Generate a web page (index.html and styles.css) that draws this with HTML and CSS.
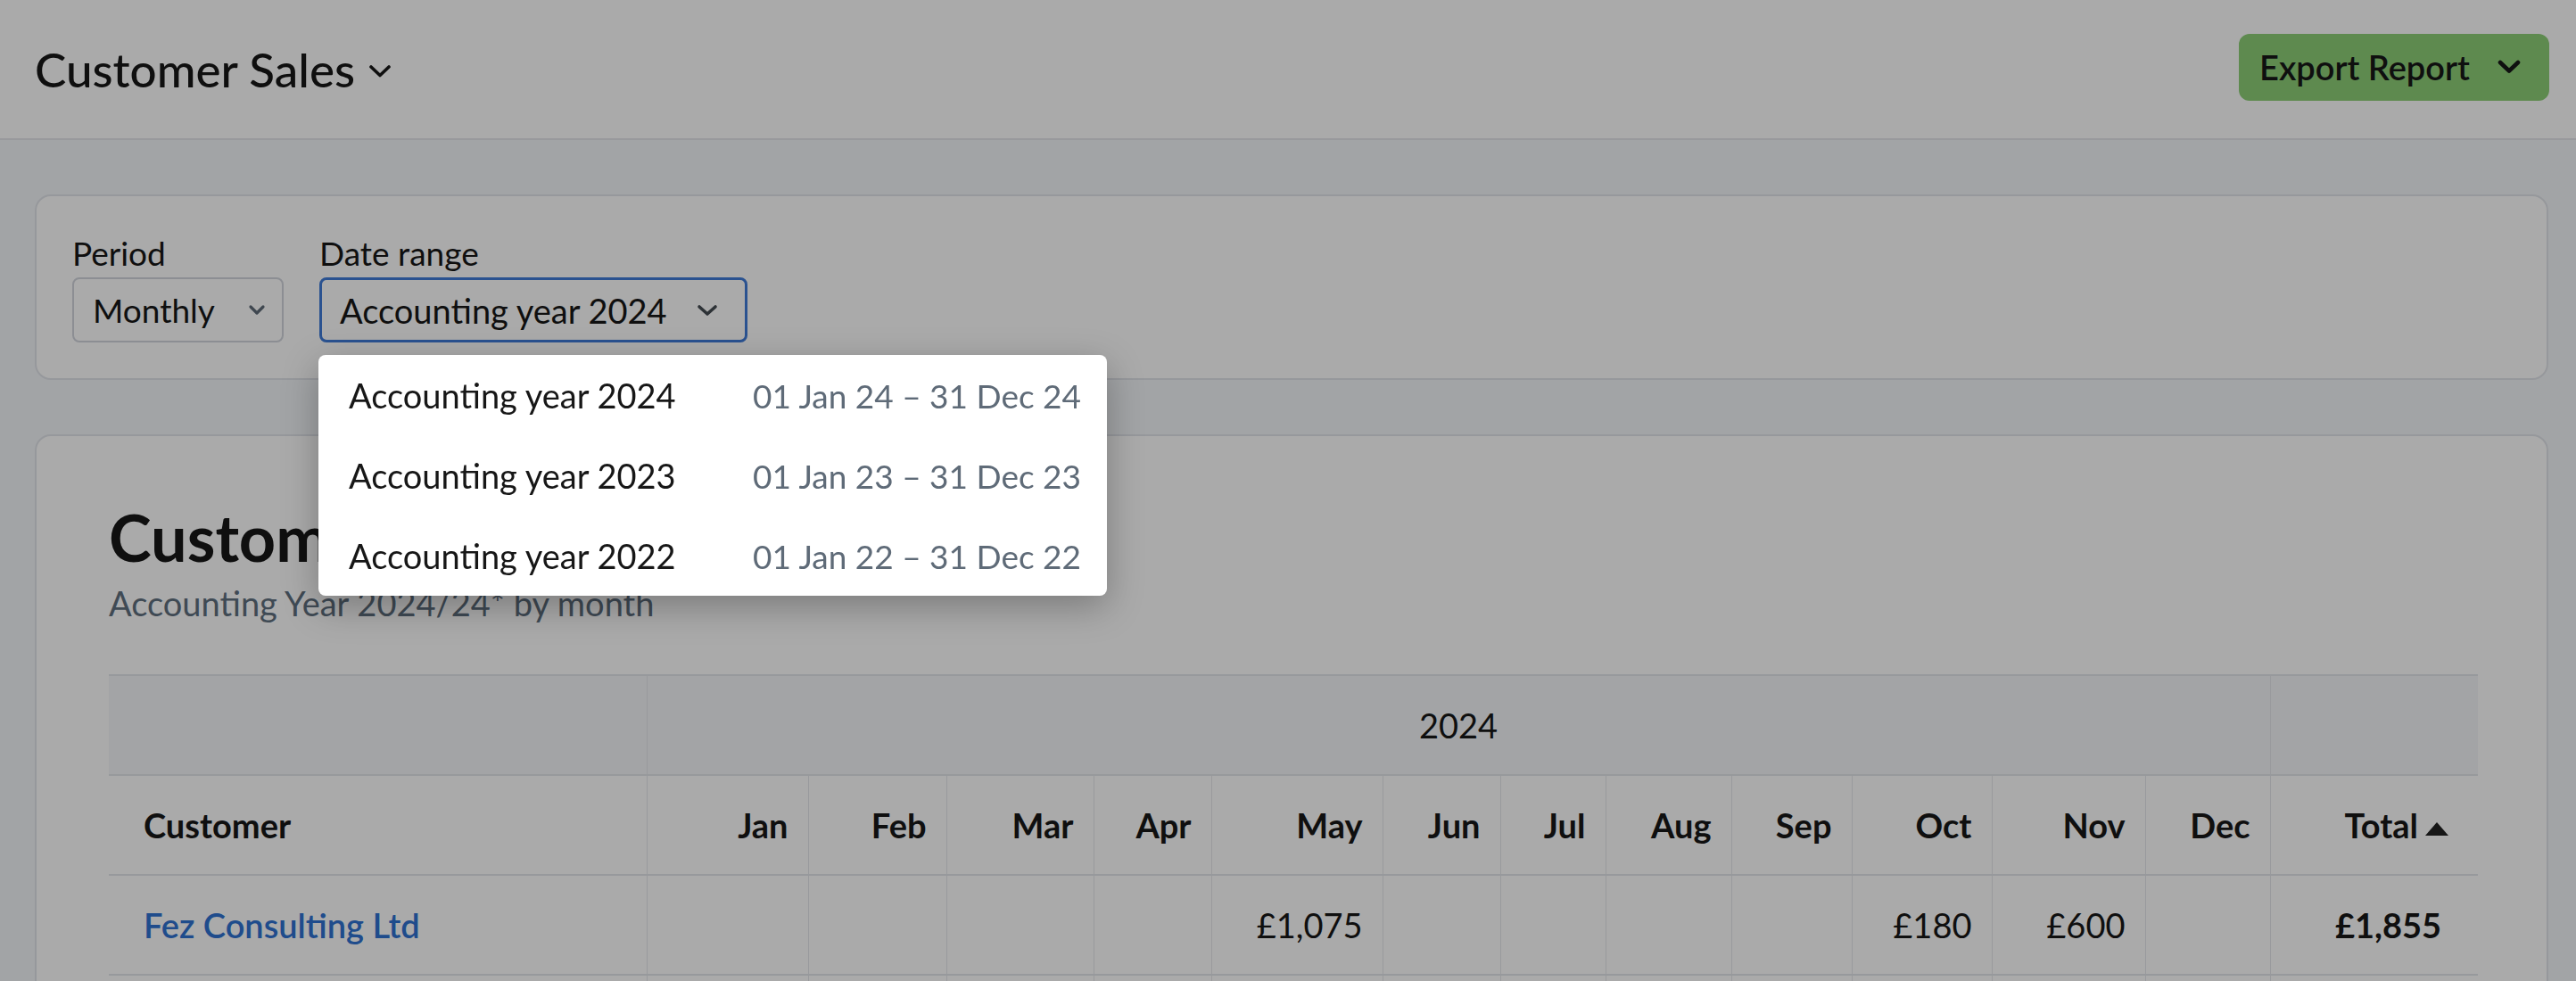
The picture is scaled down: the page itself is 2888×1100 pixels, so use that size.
FILE: index.html
```html
<!DOCTYPE html>
<html lang="en">
<head>
<meta charset="utf-8">
<title>Customer Sales</title>
<link rel="stylesheet" href="styles.css">
</head>
<body>
<header class="topbar">
  <h1 class="page-title">Customer Sales
    <svg class="title-chev" width="24" height="14" viewBox="0 0 24 14"><path d="M2 2 L12 11.5 L22 2" fill="none" stroke="#171717" stroke-width="3.6" stroke-linecap="round" stroke-linejoin="round"/></svg>
  </h1>
  <button class="export-btn">Export Report
    <svg class="export-chev" width="26" height="16" viewBox="0 0 26 16"><path d="M3 3 L13 12.5 L23 3" fill="none" stroke="#171717" stroke-width="4.6" stroke-linecap="round" stroke-linejoin="round"/></svg>
  </button>
</header>

<main class="content">
  <section class="card filters">
    <div class="field">
      <label class="field-label">Period</label>
      <div class="select select-period">
        <span>Monthly</span>
        <svg width="20" height="13" viewBox="0 0 20 13"><path d="M3 3 L10 10 L17 3" fill="none" stroke="#5f6b78" stroke-width="3.2" stroke-linecap="round" stroke-linejoin="round"/></svg>
      </div>
    </div>
    <div class="field field-range">
      <label class="field-label">Date range</label>
      <div class="select select-range">
        <span>Accounting year 2024</span>
        <svg width="24" height="14" viewBox="0 0 24 14"><path d="M3 3 L12 11 L21 3" fill="none" stroke="#444b52" stroke-width="3.6" stroke-linecap="round" stroke-linejoin="round"/></svg>
      </div>
      <ul class="menu">
        <li class="menu-item"><span>Accounting year 2024</span><span class="menu-date">01 Jan 24 – 31 Dec 24</span></li>
        <li class="menu-item"><span>Accounting year 2023</span><span class="menu-date">01 Jan 23 – 31 Dec 23</span></li>
        <li class="menu-item"><span>Accounting year 2022</span><span class="menu-date">01 Jan 22 – 31 Dec 22</span></li>
      </ul>
    </div>
  </section>

  <section class="card report">
    <h2 class="report-title">Customer Sales</h2>
    <p class="report-sub">Accounting Year 2024/24* by month</p>
    <table class="sales">
      <colgroup>
        <col class="w-cust"><col class="w-jan"><col class="w-feb"><col class="w-mar"><col class="w-apr"><col class="w-may"><col class="w-jun"><col class="w-jul"><col class="w-aug"><col class="w-sep"><col class="w-oct"><col class="w-nov"><col class="w-dec"><col class="w-total">
      </colgroup>
      <thead>
        <tr class="year-row">
          <th class="blank"></th>
          <th class="year" colspan="12">2024</th>
          <th class="blank"></th>
        </tr>
        <tr class="month-row">
          <th class="cust-head">Customer</th>
          <th>Jan</th><th>Feb</th><th>Mar</th><th>Apr</th><th>May</th><th>Jun</th><th>Jul</th><th>Aug</th><th>Sep</th><th>Oct</th><th>Nov</th><th>Dec</th>
          <th class="total-head">Total<span class="sort-up"></span></th>
        </tr>
      </thead>
      <tbody>
        <tr>
          <td class="cust"><a class="cust-link">Fez Consulting Ltd</a></td>
          <td></td><td></td><td></td><td></td><td>£1,075</td><td></td><td></td><td></td><td></td><td>£180</td><td>£600</td><td></td>
          <td class="total">£1,855</td>
        </tr>
        <tr>
          <td class="cust"></td>
          <td></td><td></td><td></td><td></td><td></td><td></td><td></td><td></td><td></td><td></td><td></td><td></td>
          <td class="total"></td>
        </tr>
      </tbody>
    </table>
  </section>
</main>

<div class="backdrop"></div>
</body>
</html>
```

FILE: styles.css
```css
* { box-sizing: border-box; }
html, body { margin: 0; padding: 0; }
body {
  background: #f4f6fa;
  font-family: Lato, "Liberation Sans", sans-serif;
  color: #171717;
  height: 1100px;
  overflow: hidden;
}

.topbar {
  height: 157px;
  background: #ffffff;
  border-bottom: 2px solid #e4e6ea;
  display: flex;
  align-items: center;
  justify-content: space-between;
  padding: 0 30px 0 39px;
}
.page-title {
  margin: 0;
  font-size: 53px;
  font-weight: 500;
  display: flex;
  align-items: center;
  gap: 16px;
  line-height: 60px;
}
.title-chev { margin-top: 4px; }

.export-btn {
  height: 75px;
  width: 348px;
  margin-bottom: 5px;
  background: #8dcf77;
  border: none;
  border-radius: 12px;
  font-family: inherit;
  font-size: 38px;
  font-weight: 600;
  color: #171717;
  display: flex;
  align-items: center;
  padding: 0 32px 0 23px;
  justify-content: space-between;
}

.content { padding: 0 31px 0 39px; }

.card {
  background: #ffffff;
  border: 2px solid #e2e5ea;
  border-radius: 18px;
}
.filters {
  margin-top: 61px;
  height: 208px;
  padding: 43px 40px 0 40px;
  display: flex;
  gap: 40px;
}
.field { display: flex; flex-direction: column; }
.field-range { position: relative; }
.field-label {
  font-size: 37px;
  line-height: 42px;
  margin-bottom: 6px;
}
.select {
  height: 73px;
  border-radius: 8px;
  display: flex;
  align-items: center;
  justify-content: space-between;
  font-size: 38px;
}
.select-period {
  width: 237px;
  border: 2px solid #d2d6dd;
  padding: 0 18px 0 21px;
  font-size: 37px;
}
.select-range {
  width: 480px;
  border: 3px solid #3f7bd9;
  padding: 0 30px 0 20px;
}

.menu {
  position: absolute;
  z-index: 20;
  top: 135px;
  left: -1px;
  width: 884px;
  margin: 0;
  padding: 0;
  list-style: none;
  background: #ffffff;
  border-radius: 8px;
  box-shadow: 0 12px 40px rgba(0, 0, 0, 0.28);
}
.menu-item {
  height: 90px;
  display: flex;
  align-items: center;
  justify-content: space-between;
  padding: 0 29px 0 34px;
  font-size: 38px;
}
.menu-date { color: #5f6b78; font-size: 37px; }

.report {
  margin-top: 61px;
  height: 800px;
  padding: 70px 81px 0 81px;
}
.report-title {
  margin: 0;
  font-size: 72px;
  font-weight: 700;
  line-height: 86px;
}
.report-sub {
  margin: 9px 0 0 0;
  font-size: 38px;
  line-height: 44px;
  color: #5f6f7f;
}

.sales {
  margin-top: 58px;
  width: 2656px;
  table-layout: fixed;
  border-collapse: collapse;
  font-size: 38px;
}
.w-cust { width: 603px; }
.w-jan { width: 181px; }
.w-feb { width: 155px; }
.w-mar { width: 165px; }
.w-apr { width: 132px; }
.w-may { width: 192px; }
.w-jun { width: 132px; }
.w-jul { width: 118px; }
.w-aug { width: 141px; }
.w-sep { width: 135px; }
.w-oct { width: 157px; }
.w-nov { width: 172px; }
.w-dec { width: 140px; }
.w-total { width: 233px; }

.sales th, .sales td {
  height: 112px;
  padding: 0 22px;
  text-align: right;
  border-top: 2px solid #e3e6eb;
  border-bottom: 2px solid #e3e6eb;
  border-left: 1px solid #e6e8ec;
  border-right: 1px solid #e6e8ec;
  white-space: nowrap;
}
.sales tr > :first-child { border-left: none; }
.sales tr > :last-child { border-right: none; }
.year-row th {
  background: #f5f7fa;
  font-weight: 400;
}
.year-row .year { text-align: center; }
.month-row th { font-weight: 700; }
.sales .cust-head, .sales .cust { text-align: left; padding-left: 39px; }
.total-head { padding-right: 33px !important; }
.sort-up {
  display: inline-block;
  width: 0; height: 0;
  margin-left: 8px;
  border-left: 13px solid transparent;
  border-right: 13px solid transparent;
  border-bottom: 15px solid #222222;
  vertical-align: 3px;
}
.sales .total { font-weight: 700; padding-right: 41px; }
.cust-link { color: #2f72d2; font-weight: 600; text-decoration: none; }

.backdrop {
  position: fixed;
  inset: 0;
  z-index: 10;
  background: rgba(0, 0, 0, 0.333);
}
```
